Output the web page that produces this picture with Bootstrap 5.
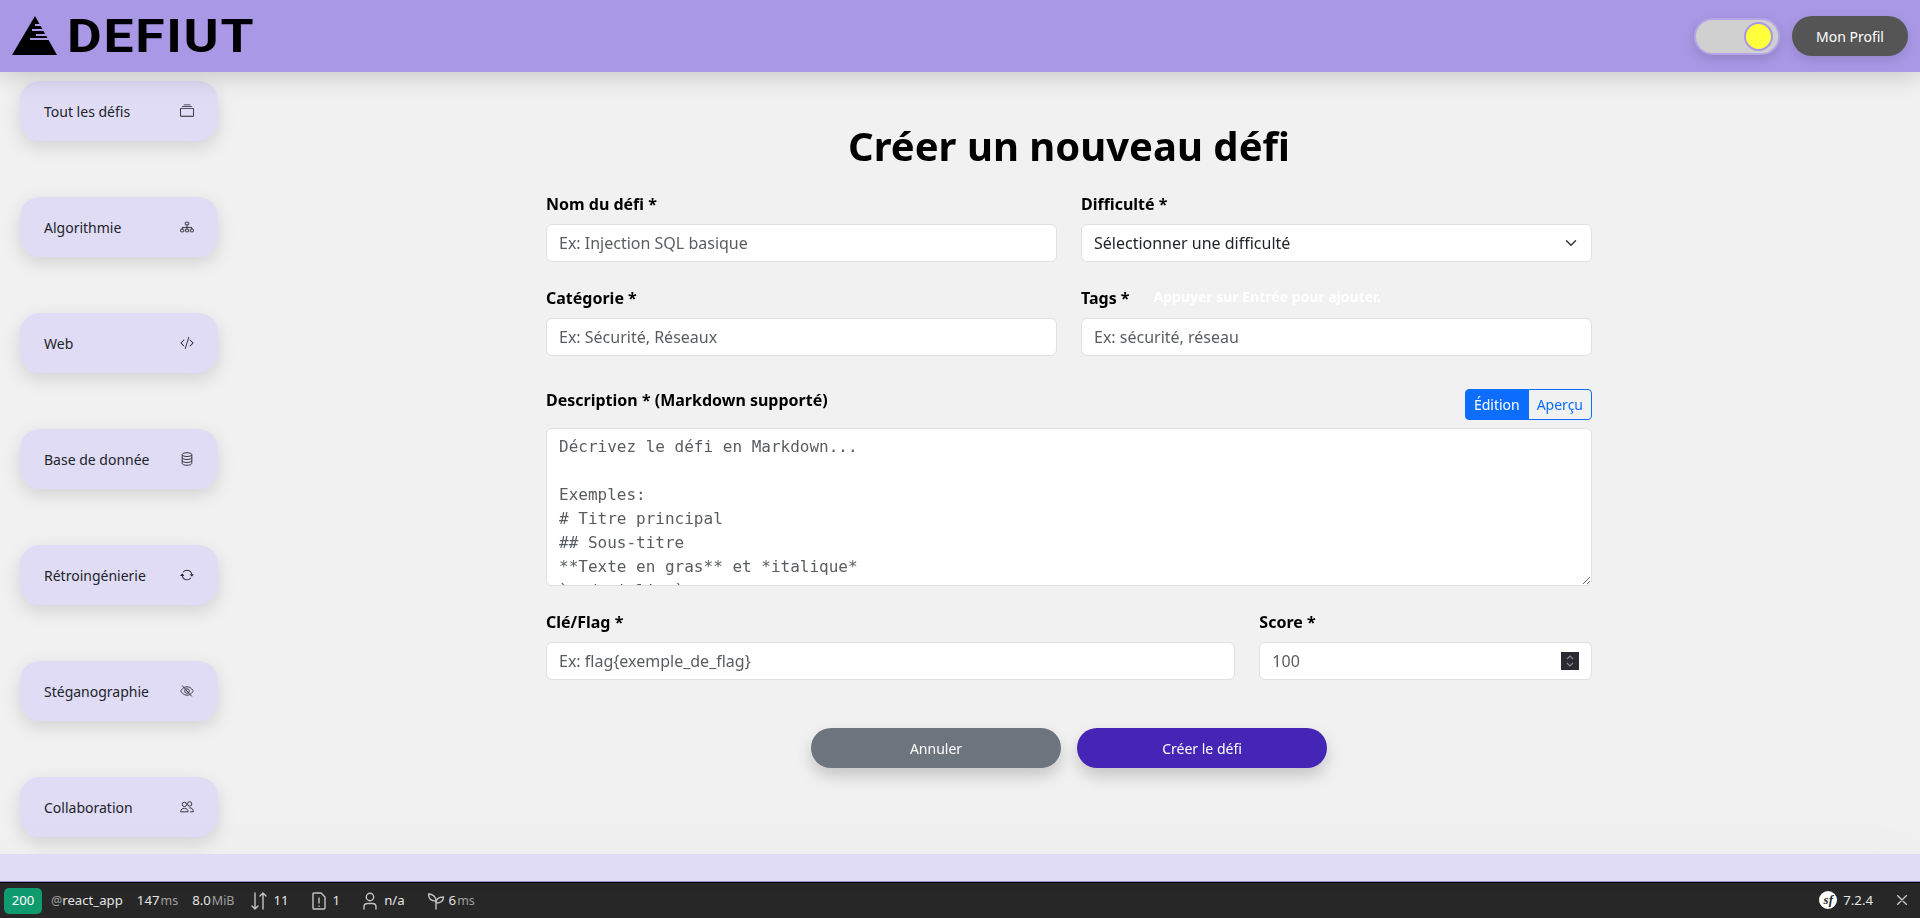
<!DOCTYPE html>
<html lang="fr">
<head>
  <meta charset="UTF-8">
  <title>Defiut - Créer un défi</title>
  <meta name="viewport" content="width=device-width, initial-scale=1">
  <link href="https://cdn.jsdelivr.net/npm/bootstrap@5.3.0/dist/css/bootstrap.min.css" rel="stylesheet">
  <style>
    html, body { height: 100%; }
    body {
      background-color: #f1f1f1;
      font-family: "Noto Sans", sans-serif;
      overflow: hidden;
    }
    .page-shell { height: 100vh; }

    /* Top bar */
    .top-bar {
      height: 72px;
      flex: none;
      background-color: #a898e6;
      box-shadow: 0 4px 24px rgba(0, 0, 0, .18);
      padding: 0 12px;
      position: relative;
      z-index: 2;
    }
    .logo-word {
      font-family: Roboto, sans-serif;
      font-weight: 700;
      font-size: 46px;
      line-height: 1;
      letter-spacing: 1.5px;
      color: #000;
      margin-left: 9px;
      display: inline-block;
      transform: scaleX(1.16);
      transform-origin: left center;
    }
    .theme-switch {
      width: 86px;
      height: 37px;
      border-radius: 19px;
      background-color: #d0d0d0;
      border: 2px solid #b3a7ea;
      padding-right: 5px;
      box-shadow: 0 4px 12px rgba(0, 0, 0, .15);
    }
    .theme-knob {
      width: 29px;
      height: 29px;
      border-radius: 50%;
      background-color: #ffff3c;
      border: 2px solid #a898e6;
    }
    .profile-btn {
      width: 116px;
      height: 40px;
      border-radius: 20px;
      border: 0;
      background-color: #555;
      color: #fff;
      font-size: 14px;
      box-shadow: 0 4px 12px rgba(0, 0, 0, .12);
    }

    /* Sidebar */
    .side-col {
      width: 218px;
      padding: 9px 0 0 20px;
      gap: 56px;
    }
    .side-item {
      width: 198px;
      height: 60px;
      flex: none;
      border-radius: 20px;
      background-color: #e0dcf6;
      color: #212529;
      font-size: 14px;
      padding: 0 24px;
      text-decoration: none;
      box-shadow: 0 6px 18px rgba(0, 0, 0, .13);
    }
    .side-item svg { width: 14px; height: 14px; }

    /* Form */
    .form-wrap { width: 1070px; padding: 0 12px; }
    .page-title {
      font-size: 40px;
      font-weight: 700;
      line-height: 48px;
      text-align: center;
      color: #000;
      margin: 50px 0 22px;
    }
    .field-label {
      font-weight: 700;
      color: #000;
      margin-bottom: 8px;
      line-height: 24px;
    }
    .field-hint {
      font-size: 14px;
      font-weight: 700;
      line-height: 1;
      vertical-align: 2px;
      color: #fff;
      margin-left: 24px;
    }
    .md-input {
      font-family: "DejaVu Sans Mono", monospace;
      height: 158px;
    }
    .desc-row { margin-top: 33px; }
    .desc-label { margin-top: -1px; }
    .spin-box {
      position: absolute;
      right: 13px;
      top: 10px;
      width: 18px;
      height: 18px;
      background-color: #2b2a33;
    }
    .action-btn {
      width: 250px;
      height: 40px;
      border: 0;
      border-radius: 20px;
      color: #fff;
      font-size: 14px;
      box-shadow: 0 8px 16px rgba(0, 0, 0, .18);
    }
    .btn-cancel { background-color: #6c757d; }
    .btn-create { background-color: #4525b5; }

    /* Footer + debug toolbar */
    .foot-band {
      height: 28px;
      flex: none;
      background-color: #e0dcf6;
      border-bottom: 1px solid #9a90c8;
      box-shadow: 0 -10px 50px rgba(0, 0, 0, .02);
      position: relative;
    }
    .debug-bar {
      height: 36px;
      flex: none;
      background-color: #272727;
      border-top: 1px solid #000;
      color: #e4e4e4;
      font-size: 13.2px;
      padding: 0 13px 0 4px;
    }
    .debug-status {
      width: 38px;
      height: 26px;
      border-radius: 5px;
      background-color: #0f9b6e;
      color: #fff;
    }
    .debug-muted { color: #a0a0a0; font-size: 12.5px; margin-left: 1px; }
    .debug-item { margin-left: 14px; }
    .debug-arrows { margin-left: 15px; }
    .debug-wide { margin-left: 22px; }
    .debug-val { margin-left: 6px; }
    .debug-bar svg { fill: none; stroke: #c4c4c4; stroke-width: 1.4; stroke-linecap: round; stroke-linejoin: round; }
    .sf-mark {
      width: 18px;
      height: 18px;
      border-radius: 50%;
      background-color: #fff;
      color: #272727;
      font-family: "Liberation Serif", serif;
      font-style: italic;
      font-weight: 700;
      font-size: 13px;
      line-height: 17px;
      text-align: center;
    }
  </style>
</head>
<body>
<div class="page-shell d-flex flex-column">

  <!-- Top bar -->
  <header class="top-bar d-flex align-items-center justify-content-between">
    <div class="d-flex align-items-center">
      <svg width="46" height="40" viewBox="0 0 46 40" aria-hidden="true">
        <polygon points="23,0 0,39 45,39" fill="#000"/>
        <g fill="#a898e6">
          <rect x="23" y="8" width="6" height="2"/>
          <rect x="20" y="13" width="12" height="2"/>
          <rect x="24" y="18" width="11" height="2"/>
          <rect x="18" y="22" width="19" height="2"/>
        </g>
      </svg>
      <span class="logo-word">DEFIUT</span>
    </div>
    <div class="d-flex align-items-center gap-2">
      <div class="theme-switch d-flex align-items-center justify-content-end me-1">
        <div class="theme-knob"></div>
      </div>
      <button class="profile-btn" type="button">Mon Profil</button>
    </div>
  </header>

  <div class="d-flex flex-grow-1 overflow-hidden">
    <!-- Sidebar -->
    <aside class="side-col d-flex flex-column flex-shrink-0">
      <a class="side-item d-flex align-items-center justify-content-between" href="#">
        <span>Tout les défis</span>
        <svg viewBox="0 0 16 16" fill="currentColor"><path d="M2.5 3.5a.5.5 0 0 1 0-1h11a.5.5 0 0 1 0 1h-11zm2-2a.5.5 0 0 1 0-1h7a.5.5 0 0 1 0 1h-7zM0 13a1.5 1.5 0 0 0 1.5 1.5h13A1.5 1.5 0 0 0 16 13V6a1.5 1.5 0 0 0-1.5-1.5h-13A1.5 1.5 0 0 0 0 6v7zm1.5.5A.5.5 0 0 1 1 13V6a.5.5 0 0 1 .5-.5h13a.5.5 0 0 1 .5.5v7a.5.5 0 0 1-.5.5h-13z"/></svg>
      </a>
      <a class="side-item d-flex align-items-center justify-content-between" href="#">
        <span>Algorithmie</span>
        <svg viewBox="0 0 16 16" fill="none" stroke="currentColor"><rect x="6" y="2.5" width="4" height="3" rx=".6"/><path d="M8 5.5v3M2.5 10.5v-2h11v2M8 8.5v2"/><rect x=".7" y="10.5" width="3.6" height="3" rx=".6"/><rect x="6.2" y="10.5" width="3.6" height="3" rx=".6"/><rect x="11.7" y="10.5" width="3.6" height="3" rx=".6"/></svg>
      </a>
      <a class="side-item d-flex align-items-center justify-content-between" href="#">
        <span>Web</span>
        <svg viewBox="0 0 16 16" fill="currentColor"><path d="M10.478 1.647a.5.5 0 1 0-.956-.294l-4 13a.5.5 0 0 0 .956.294l4-13zM4.854 4.146a.5.5 0 0 1 0 .708L1.707 8l3.147 3.146a.5.5 0 0 1-.708.708l-3.5-3.5a.5.5 0 0 1 0-.708l3.5-3.5a.5.5 0 0 1 .708 0zm6.292 0a.5.5 0 0 0 0 .708L14.293 8l-3.147 3.146a.5.5 0 0 0 .708.708l3.5-3.5a.5.5 0 0 0 0-.708l-3.5-3.5a.5.5 0 0 0-.708 0z"/></svg>
      </a>
      <a class="side-item d-flex align-items-center justify-content-between" href="#">
        <span>Base de donnée</span>
        <svg viewBox="0 0 16 16" fill="none" stroke="currentColor"><ellipse cx="8" cy="3" rx="5.5" ry="2.2"/><path d="M2.5 3v10c0 1.2 2.5 2.2 5.5 2.2s5.5-1 5.5-2.2V3M2.5 6.4c0 1.2 2.5 2.2 5.5 2.2s5.5-1 5.5-2.2M2.5 9.8c0 1.2 2.5 2.2 5.5 2.2s5.5-1 5.5-2.2"/></svg>
      </a>
      <a class="side-item d-flex align-items-center justify-content-between" href="#">
        <span>Rétroingénierie</span>
        <svg viewBox="0 0 16 16" fill="currentColor"><path d="M11.534 7h3.932a.25.25 0 0 1 .192.41l-1.966 2.36a.25.25 0 0 1-.384 0l-1.966-2.36a.25.25 0 0 1 .192-.41zm-11 2h3.932a.25.25 0 0 0 .192-.41L2.692 6.23a.25.25 0 0 0-.384 0L.342 8.59A.25.25 0 0 0 .534 9z"/><path d="M8 3c-1.552 0-2.94.707-3.857 1.818a.5.5 0 1 1-.771-.636A6.002 6.002 0 0 1 13.917 7H12.9A5.002 5.002 0 0 0 8 3zM3.1 9a5.002 5.002 0 0 0 8.757 2.182.5.5 0 1 1 .771.636A6.002 6.002 0 0 1 2.083 9H3.1z"/></svg>
      </a>
      <a class="side-item d-flex align-items-center justify-content-between" href="#">
        <span>Stéganographie</span>
        <svg viewBox="0 0 16 16" fill="none" stroke="currentColor"><path d="M.8 8S3.4 3.2 8 3.2 15.2 8 15.2 8 12.6 12.8 8 12.8.8 8 .8 8z"/><circle cx="8" cy="8" r="2.6"/><path d="M2.5 1.8l11 12.4"/></svg>
      </a>
      <a class="side-item d-flex align-items-center justify-content-between" href="#">
        <span>Collaboration</span>
        <svg viewBox="0 0 16 16" fill="none" stroke="currentColor"><circle cx="5" cy="5" r="2.5"/><circle cx="11" cy="4.5" r="2.5"/><path d="M.8 13.5c0-2.6 1.8-4 4.2-4s4.2 1.4 4.2 4zM10.5 9c2.6-.3 4.7 1 4.7 4.5H11.5"/></svg>
      </a>
    </aside>

    <!-- Form -->
    <main class="flex-grow-1 d-flex justify-content-center">
      <div class="form-wrap">
        <h1 class="page-title">Créer un nouveau défi</h1>
        <form>
          <div class="row gx-4 gy-4">
            <div class="col-6">
              <label class="field-label d-block">Nom du défi *</label>
              <input type="text" class="form-control" placeholder="Ex: Injection SQL basique">
            </div>
            <div class="col-6">
              <label class="field-label d-block">Difficulté *</label>
              <select class="form-select">
                <option>Sélectionner une difficulté</option>
              </select>
            </div>
            <div class="col-6">
              <label class="field-label d-block">Catégorie *</label>
              <input type="text" class="form-control" placeholder="Ex: Sécurité, Réseaux">
            </div>
            <div class="col-6">
              <label class="field-label d-block">Tags *<span class="field-hint">Appuyer sur Entrée pour ajouter.</span></label>
              <input type="text" class="form-control" placeholder="Ex: sécurité, réseau">
            </div>
          </div>

          <div class="desc-row d-flex align-items-start justify-content-between mb-2">
            <label class="field-label desc-label mb-0">Description * (Markdown supporté)</label>
            <div class="btn-group btn-group-sm">
              <button type="button" class="btn btn-primary">Édition</button>
              <button type="button" class="btn btn-outline-primary">Aperçu</button>
            </div>
          </div>
          <textarea class="form-control md-input" rows="6" placeholder="Décrivez le défi en Markdown...

Exemples:
# Titre principal
## Sous-titre
**Texte en gras** et *italique*
`code inline`"></textarea>

          <div class="row gx-4 mt-4">
            <div class="col-8">
              <label class="field-label d-block">Clé/Flag *</label>
              <input type="text" class="form-control" placeholder="Ex: flag{exemple_de_flag}">
            </div>
            <div class="col-4">
              <label class="field-label d-block">Score *</label>
              <div class="position-relative">
                <input type="text" class="form-control" placeholder="100">
                <span class="spin-box d-block">
                  <svg width="18" height="18" viewBox="0 0 18 18" fill="none" stroke="#8a8791" stroke-width="1.2" class="d-block"><path d="M6 7l3-3 3 3M6 11l3 3 3-3"/></svg>
                </span>
              </div>
            </div>
          </div>

          <div class="d-flex justify-content-center gap-3 mt-5">
            <button type="button" class="action-btn btn-cancel">Annuler</button>
            <button type="button" class="action-btn btn-create">Créer le défi</button>
          </div>
        </form>
      </div>
    </main>
  </div>

  <div class="foot-band"></div>

  <!-- Debug toolbar -->
  <div class="debug-bar d-flex align-items-center justify-content-between">
    <div class="d-flex align-items-center">
      <span class="debug-status d-flex align-items-center justify-content-center">200</span>
      <span class="ms-2"><span class="debug-muted">@</span>react_app</span>
      <span class="debug-item">147<span class="debug-muted">ms</span></span>
      <span class="debug-item">8.0<span class="debug-muted">MiB</span></span>
      <svg class="debug-arrows" width="18" height="20" viewBox="0 0 18 20"><path d="M5 2v16M2 15l3 3 3-3M13 18V2M10 5l3-3 3 3"/></svg>
      <span class="debug-val">11</span>
      <svg class="debug-wide" width="16" height="20" viewBox="0 0 16 20"><path d="M2 3a1 1 0 0 1 1-1h7l4 4v11a1 1 0 0 1-1 1H3a1 1 0 0 1-1-1zM8 7v5M8 15v.3"/></svg>
      <span class="debug-val">1</span>
      <svg class="debug-wide" width="16" height="20" viewBox="0 0 16 20"><circle cx="8" cy="6" r="3.7"/><path d="M2 18v-2c0-2 1.5-3.5 3.5-3.5h5c2 0 3.5 1.500 3.500 3.500v2"/></svg>
      <span class="debug-val">n/a</span>
      <svg class="debug-wide" width="18" height="20" viewBox="0 0 18 20"><path d="M9 18V10M9 10C9 6 6 3 1.5 3 1.5 7 4 10 9 10zM9 12c0-4 3-6 7.500-6 0 4-2.500 6-7.500 6z"/></svg>
      <span class="ms-1">6<span class="debug-muted">ms</span></span>
    </div>
    <div class="d-flex align-items-center">
      <span class="sf-mark">sf</span>
      <span class="debug-val">7.2.4</span>
      <svg class="ms-4" width="10" height="10" viewBox="0 0 10 10"><path d="M0 0l10 10M10 0L0 10"/></svg>
    </div>
  </div>
</div>
<script src="https://cdn.jsdelivr.net/npm/bootstrap@5.3.0/dist/js/bootstrap.bundle.min.js"></script>
</body>
</html>
